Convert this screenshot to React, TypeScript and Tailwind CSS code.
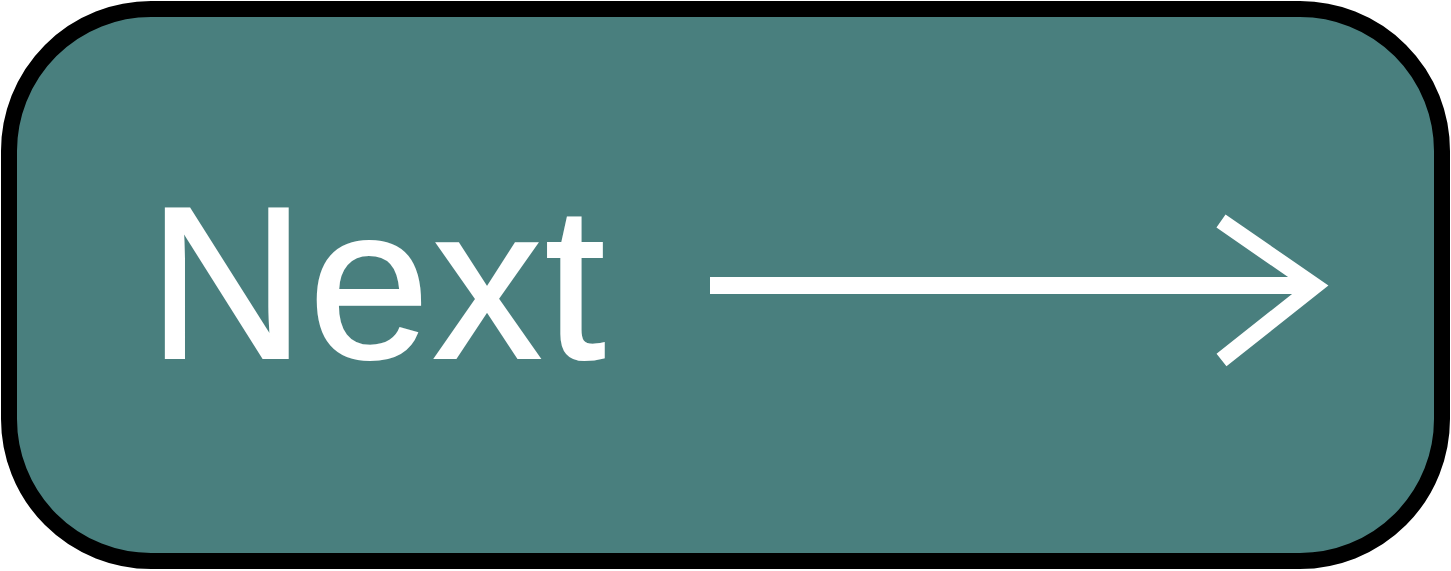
export default function App() {
  return (
    <div className="w-[1451px] h-[571px] bg-white pt-[1px] pl-[1px]">
      <button
        type="button"
        className="flex items-start w-[1449px] h-[568px] rounded-[150px] border-[16px] border-black bg-[#497f7e] text-white"
      >
        <span
          className="block w-[552px] shrink-0 ml-[131px] mt-[157px] text-left text-[218px] leading-[218px] tracking-[3px] [-webkit-text-stroke:2px_white]"
          style={{ fontFamily: '"Liberation Sans", Arial, sans-serif' }}
        >
          Next
        </span>
        <svg
          width="640"
          height="180"
          viewBox="0 0 640 180"
          className="shrink-0 mt-[183px]"
          fill="none"
        >
          <rect x="10" y="77" width="605" height="17" fill="white" />
          <polyline
            points="521,21 615,86 521.5,160"
            stroke="white"
            strokeWidth="16"
            strokeLinejoin="miter"
            strokeMiterlimit="10"
            strokeLinecap="butt"
          />
        </svg>
      </button>
    </div>
  );
}
